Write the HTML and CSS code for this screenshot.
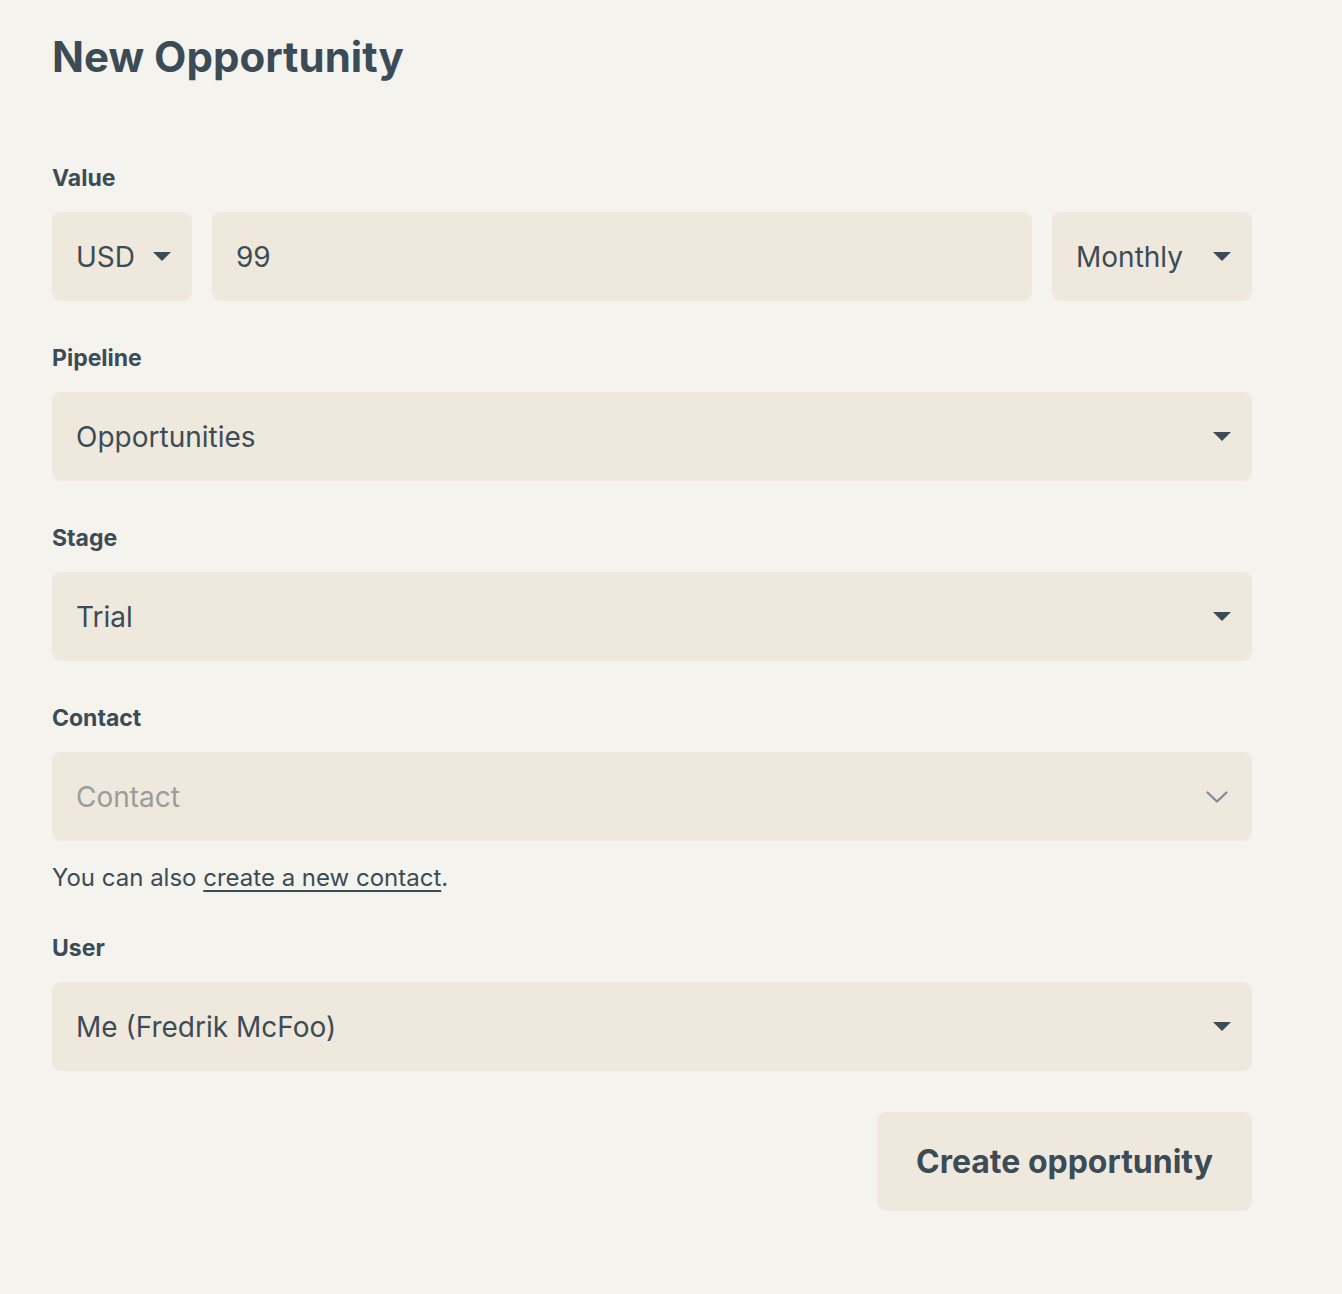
FILE: index.html
```html
<!DOCTYPE html>
<html lang="en">
<head>
<meta charset="utf-8">
<title>New Opportunity</title>
<link rel="stylesheet" href="styles.css">
</head>
<body>
<main class="page">
  <h1 class="title">New Opportunity</h1>
  <form class="form">
    <div class="field">
      <label class="label">Value</label>
      <div class="value-row">
        <div class="select select-currency"><span>USD</span><span class="caret"></span></div>
        <div class="input input-amount">99</div>
        <div class="select select-period"><span>Monthly</span><span class="caret"></span></div>
      </div>
    </div>
    <div class="field">
      <label class="label">Pipeline</label>
      <div class="select"><span>Opportunities</span><span class="caret"></span></div>
    </div>
    <div class="field">
      <label class="label">Stage</label>
      <div class="select"><span>Trial</span><span class="caret"></span></div>
    </div>
    <div class="field field-contact">
      <label class="label">Contact</label>
      <div class="select select-search"><span class="placeholder">Contact</span>
        <svg class="chevron" width="22" height="12" viewBox="0 0 22 12"><path d="M1.5 1.5 L11 10.5 L20.5 1.5" fill="none" stroke="#7d8b98" stroke-width="2.2" stroke-linecap="round" stroke-linejoin="round"/></svg>
      </div>
      <p class="help">You can also <a href="#" class="link">create a new contact</a>.</p>
    </div>
    <div class="field">
      <label class="label">User</label>
      <div class="select"><span>Me (Fredrik McFoo)</span><span class="caret"></span></div>
    </div>
    <div class="actions">
      <button type="button" class="button">Create opportunity</button>
    </div>
  </form>
</main>
</body>
</html>
```
FILE: styles.css
```css
html, body {
  margin: 0;
  padding: 0;
  background: #f5f3ee;
}
body {
  font-family: Inter, "Noto Sans", sans-serif;
  color: #3c4c56;
}
.page {
  width: 1200px;
  padding: 30px 0 0 52px;
}
.title {
  margin: 0;
  font-size: 42px;
  font-weight: 700;
  line-height: 54px;
  letter-spacing: 0;
}
.form {
  display: flex;
  flex-direction: column;
  margin-top: 79px;
}
.field {
  display: flex;
  flex-direction: column;
  margin-bottom: 42px;
}
.field-contact {
  margin-bottom: 40px;
}
.label {
  font-size: 23px;
  font-weight: 700;
  line-height: 30px;
  margin-bottom: 19px;
}
.value-row {
  display: flex;
  gap: 20px;
}
.select, .input {
  box-sizing: border-box;
  height: 89px;
  background: #efe8dd;
  border-radius: 9px;
  display: flex;
  align-items: center;
  justify-content: space-between;
  padding: 0 21px 0 24px;
  font-size: 28px;
  line-height: 1;
}
.select-currency { width: 140px; }
.input-amount { flex: 1; }
.select-period { width: 200px; }
.caret {
  width: 0;
  height: 0;
  border-left: 9.5px solid transparent;
  border-right: 9.5px solid transparent;
  border-top: 9.5px solid #3c4c56;
}
.placeholder { color: #9a9d9a; }
.select-search { padding-right: 24px; }
.chevron { display: block; }
.help {
  margin: 22px 0 0;
  font-size: 24px;
  line-height: 30px;
}
.link {
  color: #3c4c56;
  text-decoration: underline;
  text-underline-offset: 4px;
  text-decoration-thickness: 1.5px;
}
.actions {
  display: flex;
  justify-content: flex-end;
  margin-top: -1px;
}
.button {
  width: 375px;
  height: 99px;
  border: 0;
  border-radius: 9px;
  background: #efe8dd;
  color: #3c4c56;
  font-family: Inter, "Noto Sans", sans-serif;
  font-size: 32px;
  font-weight: 700;
  padding: 0;
}
```
